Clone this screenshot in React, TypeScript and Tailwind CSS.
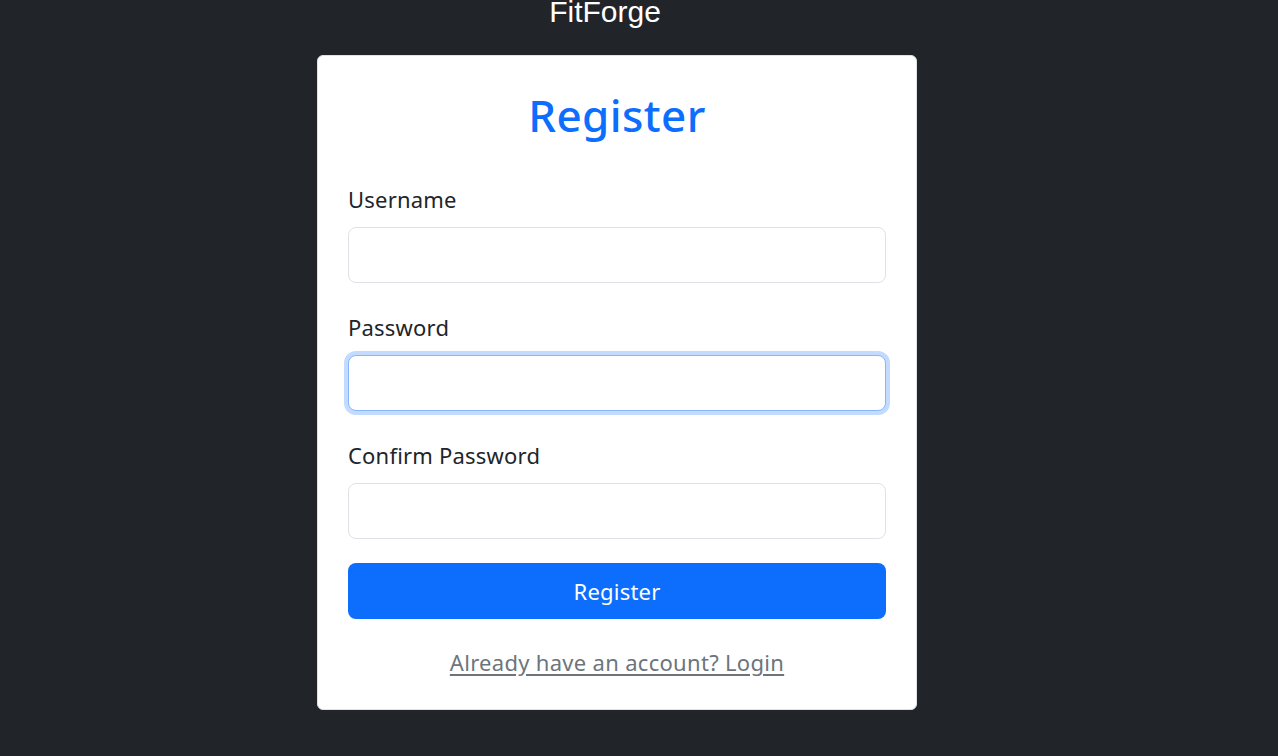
const font = { fontFamily: '"Noto Sans", "Open Sans", sans-serif' };

type FieldProps = {
    label: string;
    focused?: boolean;
    first?: boolean;
};

const Field = ({ label, focused, first }: FieldProps) => {
    return (
        <div className={first ? "mt-[45px]" : "mt-[29px]"}>
            <label className="block text-[22px] leading-[30px] tracking-[0.2px] text-[#212529] mb-[13px]">{label}</label>
            <input
                type={label.includes("Password") ? "password" : "text"}
                className={
                    focused
                        ? "block w-full h-[56px] rounded-lg border border-[#86b7fe] bg-white px-4 text-[20px] outline-none shadow-[0_0_0_4px_rgba(13,110,253,0.25)]"
                        : "block w-full h-[56px] rounded-lg border border-[#dee2e6] bg-white px-4 text-[20px] outline-none"
                }
            />
        </div>
    );
};

const App = () => {
    return (
        <div className="min-h-screen w-full bg-[#212529] overflow-hidden" style={font}>
            <div className="flex justify-center pr-[68px] -mt-[3px]">
                <h1
                    className="text-white text-[30px] leading-[30px] font-normal"
                    style={{ fontFamily: '"Liberation Sans", Arial, sans-serif' }}
                >
                    FitForge
                </h1>
            </div>
            <div className="flex justify-center pr-[44px] mt-[28px]">
                <div className="w-[600px] bg-white border border-[#dee2e6] rounded-md px-[30px] pt-[35px] pb-[32px]">
                    <h2 className="text-center text-[44px] leading-[48px] tracking-[0.4px] font-medium text-[#0d6efd]">
                        Register
                    </h2>
                    <form onSubmit={(e) => e.preventDefault()}>
                        <Field label="Username" first />
                        <Field label="Password" focused />
                        <Field label="Confirm Password" />
                        <button
                            type="submit"
                            className="mt-[24px] w-full h-[56px] rounded-lg bg-[#0d6efd] text-white text-[22px] tracking-[0.2px] hover:bg-[#0b5ed7]"
                        >
                            Register
                        </button>
                    </form>
                    <div className="mt-[28px] text-center text-[22px] leading-[30px] tracking-[0.3px]">
                        <a href="#" className="text-[#6c757d] underline underline-offset-[3px]">
                            Already have an account? Login
                        </a>
                    </div>
                </div>
            </div>
        </div>
    );
};

export default App;
